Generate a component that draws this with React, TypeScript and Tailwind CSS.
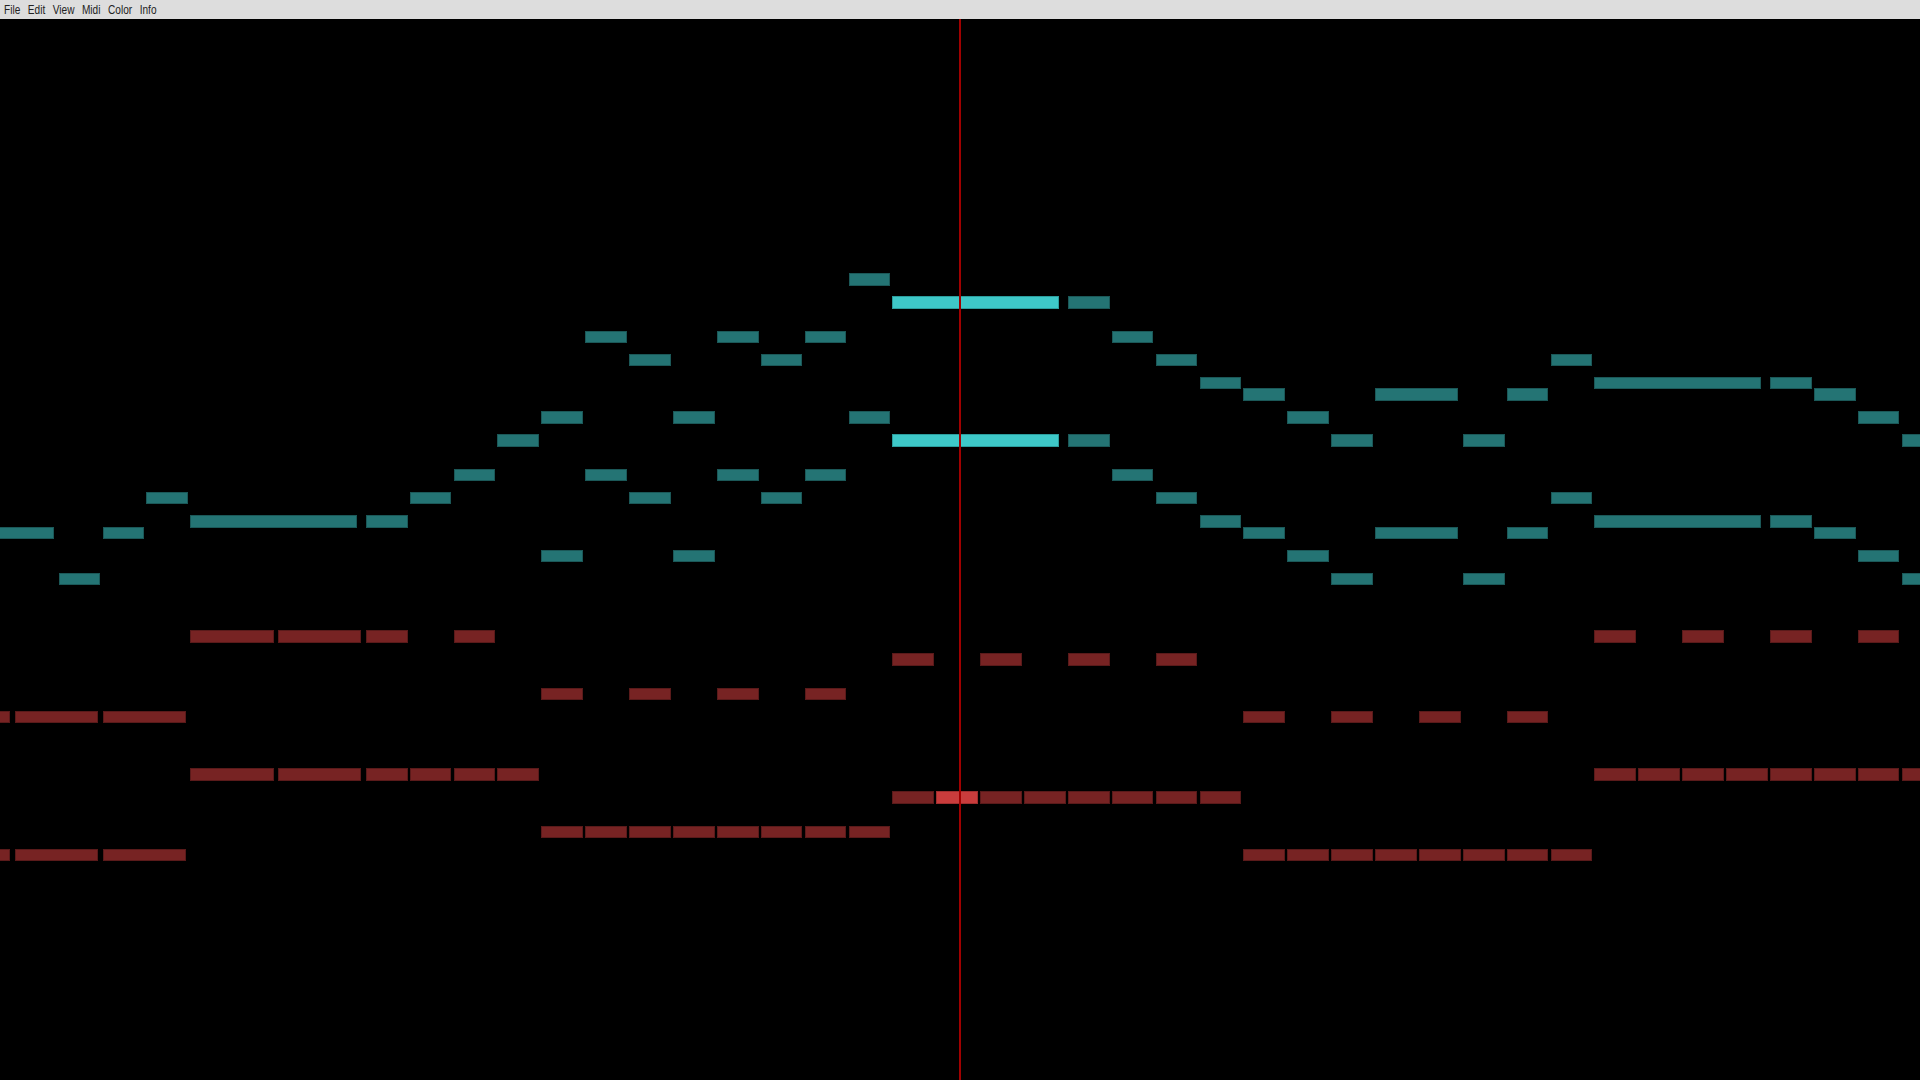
import React from "react";

type Note = { s: number; k: number; d?: number; on?: boolean };

// beat grid measured from the reference
const BEAT = 43.88;
const ORIGIN_X = 892.4;
const SEMI = 11.51;
const TOP_Y = 273.3;
const MENU_H = 19;

const teal: Note[] = [
  { s: 0, k: -1 },
  { s: 2, k: 0, d: 4, on: true }, { s: 2, k: 4 },
  { s: 5, k: -7 }, { s: 5, k: -4 }, { s: 5, k: -2 }, { s: 5, k: 5 },
  { s: 7, k: -6 }, { s: 7, k: -3 }, { s: 7, k: 6 }, { s: 7, k: 15 },
  { s: 9, k: 7 }, { s: 9, k: 16, d: 4 }, { s: 9, k: 20 },
  { s: 10, k: 8 }, { s: 10, k: 11, d: 2 }, { s: 10, k: 14 }, { s: 10, k: 21 },
  { s: 12, k: -8 }, { s: 12, k: -5 }, { s: 12, k: -1 }, { s: 12, k: 9 }, { s: 12, k: 22 },
  { s: 14, k: -9 }, { s: 14, k: 0, d: 4, on: true }, { s: 14, k: 4 }, { s: 14, k: 10 }, { s: 14, k: 13 }, { s: 14, k: 23 },
  { s: 17, k: -10 }, { s: 17, k: -7 }, { s: 17, k: -4 }, { s: 17, k: -2 }, { s: 17, k: 5 },
  { s: 19, k: -17 }, { s: 19, k: -11 }, { s: 19, k: -6 }, { s: 19, k: -3 }, { s: 19, k: 6 }, { s: 19, k: 15 },
  { s: 21, k: -16, d: 4 }, { s: 21, k: -12 }, { s: 21, k: 7 }, { s: 21, k: 16, d: 4 }, { s: 21, k: 20 },
  { s: 22, k: -21, d: 2 }, { s: 22, k: -18 }, { s: 22, k: 8 }, { s: 22, k: 11, d: 2 }, { s: 22, k: 14 }, { s: 22, k: 21 },
  { s: 24, k: -8 }, { s: 24, k: -5 }, { s: 24, k: 9 }, { s: 24, k: 22 },
  { s: 26, k: -19 }, { s: 26, k: 10 }, { s: 26, k: 13 }, { s: 26, k: 23 },
];

const run = (s: number, from: number, to: number): Note[] =>
  Array.from({ length: to - from + 1 }, (_, i) => ({ s, k: from + i }));

const red: Note[] = [
  { s: 31, k: -16, d: 2 }, { s: 31, k: -14, d: 2 }, { s: 31, k: -12 }, { s: 31, k: -10 },
  { s: 31, k: 16 }, { s: 31, k: 18 }, { s: 31, k: 20 }, { s: 31, k: 22 },
  { s: 33, k: 0 }, { s: 33, k: 2 }, { s: 33, k: 4 }, { s: 33, k: 6 },
  { s: 36, k: -8 }, { s: 36, k: -6 }, { s: 36, k: -4 }, { s: 36, k: -2 },
  { s: 38, k: -22, d: 2 }, { s: 38, k: -20, d: 2 }, { s: 38, k: -18, d: 2 },
  { s: 38, k: 8 }, { s: 38, k: 10 }, { s: 38, k: 12 }, { s: 38, k: 14 },
  { s: 43, k: -16, d: 2 }, { s: 43, k: -14, d: 2 }, ...run(43, -12, -9), ...run(43, 16, 23),
  ...run(45, 0, 7).map((n) => (n.k === 1 ? { ...n, on: true } : n)),
  ...run(48, -8, -1),
  { s: 50, k: -22, d: 2 }, { s: 50, k: -20, d: 2 }, { s: 50, k: -18, d: 2 }, ...run(50, 8, 15),
];

function NoteBar({ note, color }: { note: Note; color: "teal" | "red" }) {
  const d = note.d ?? 1;
  // position comes from the note data (beat / pitch)
  const style = {
    left: ORIGIN_X + note.k * BEAT,
    top: TOP_Y + note.s * SEMI - MENU_H,
    width: d * BEAT * 0.95,
  };
  let cls = "";
  if (color === "teal") {
    cls = note.on
      ? "bg-[#3ec8c8] border-[#2c9d9d]"
      : "bg-[#247474] border-[#1b5858]";
  } else {
    cls = note.on
      ? "bg-[#c93c3c] border-[#a02e2e]"
      : "bg-[#772323] border-[#5a1a1a]";
  }
  return <div className={`absolute h-[12.5px] border ${cls}`} style={style} />;
}

export default function App() {
  const menus = ["File", "Edit", "View", "Midi", "Color", "Info"];
  return (
    <div className="w-[1920px] h-[1080px] flex flex-col bg-black overflow-hidden">
      {/* menu bar */}
      <div className="h-[19px] shrink-0 bg-[#dddddd] flex items-center pl-[4px] font-['Liberation_Sans',sans-serif] text-[12px] text-[#222222] leading-none">
        <div className="flex items-center gap-[9px] scale-x-[0.84] origin-left">
          {menus.map((m) => (
            <span key={m}>{m}</span>
          ))}
        </div>
      </div>

      {/* piano roll */}
      <div className="relative flex-1 bg-black overflow-hidden">
        {teal.map((n, i) => (
          <NoteBar key={"t" + i} note={n} color="teal" />
        ))}
        {red.map((n, i) => (
          <NoteBar key={"r" + i} note={n} color="red" />
        ))}
        {/* playhead */}
        <div className="absolute top-0 bottom-0 left-[959px] w-[2px] bg-[#a00000]" />
      </div>
    </div>
  );
}
